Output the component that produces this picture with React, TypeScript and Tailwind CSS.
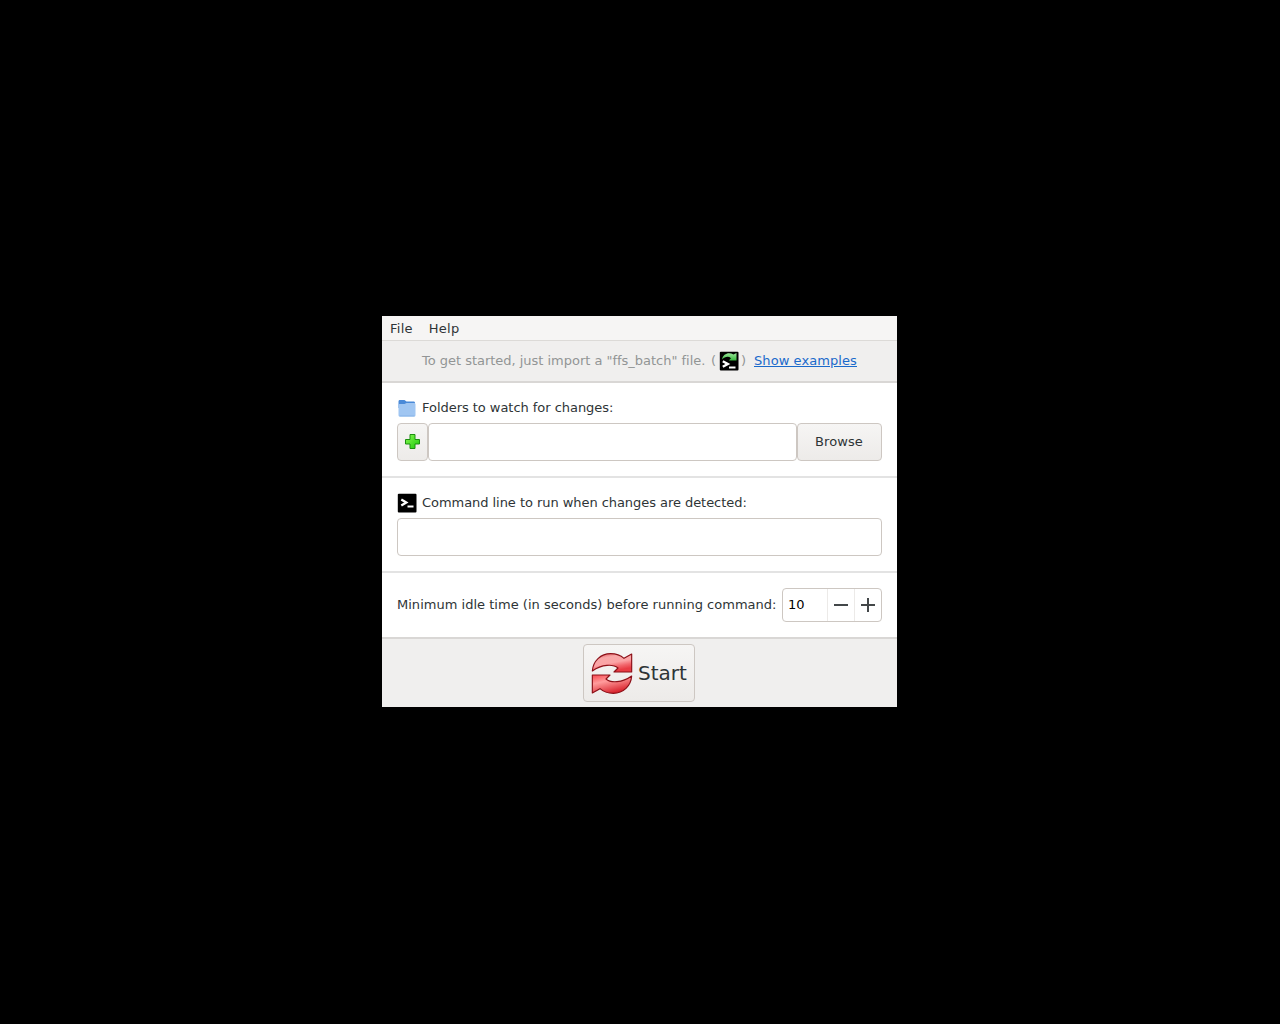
import { useId } from "react";

function TerminalIcon({ sync = false }: { sync?: boolean }) {
  const id = useId();
  return (
    <svg width="20" height="20" viewBox="0 0 20 20" className="shrink-0">
      <defs>
        <linearGradient id={id} x1="0" y1="0" x2="0" y2="1">
          <stop offset="0" stopColor="#9be89a" />
          <stop offset="1" stopColor="#35b43c" />
        </linearGradient>
      </defs>
      <rect x="0.8" y="0.8" width="18.700" height="18.700" rx="1" fill="#000" />
      {sync ? (
        <>
          <path d="M3 8.5C4 2.500 10 0.800 14.500 3.500L17.500 2V9.500H9.800L12 7.200C9.500 5 6 5.500 3 8.500Z" fill={`url(#${id})`} />
          <path d="M3.800 10.300L8.800 13L3.800 15.800" fill="none" stroke="#fff" strokeWidth="2.400" />
          <path d="M10 16.500H16.500" stroke="#fff" strokeWidth="2" />
        </>
      ) : (
        <>
          <path d="M4.300 6.500L9.300 9.500L4.300 12.500" fill="none" stroke="#fff" strokeWidth="2.300" />
          <path d="M10.500 13.500H16.500" stroke="#fff" strokeWidth="2" />
        </>
      )}
    </svg>
  );
}

function FolderIcon() {
  return (
    <svg width="20" height="20" viewBox="0 0 20 20" className="shrink-0">
      <path d="M1.500 3.500C1.500 2.500 2 2 3 2H7.500L9.500 3.500H16.500C17.500 3.500 18 4 18 5V10H1.500Z" fill="#4a8ad8" />
      <path d="M1.500 7C1.500 6.500 2 6 3 6H7.500L9.500 5H17C18 5 18.500 5.500 18.500 6.500V17C18.500 18 18 18.500 17 18.500H3C2 18.500 1.500 18 1.500 17Z" fill="#a0c6f2" />
      <path d="M2.500 18H17.500" stroke="#86b3e8" />
    </svg>
  );
}

function AddIcon() {
  return (
    <svg width="17" height="17" viewBox="0 0 17 17" className="mb-px">
      <defs>
        <linearGradient id="add-fill" x1="0" y1="0" x2="1" y2="1">
          <stop offset="0" stopColor="#8dfa55" />
          <stop offset="1" stopColor="#18c808" />
        </linearGradient>
      </defs>
      <path d="M6 1.500H11V6.500H15.500V11H11V15.500H6V11H1.500V6.500H6Z" fill="url(#add-fill)" stroke="#1c8f10" strokeLinejoin="round" />
    </svg>
  );
}

const ARROW =
  "M13 63C15 33 38 11 68 11C84 11 98 16 108 25L131 12V66H78L90 54C76 42 42 42 13 63Z";

function SyncIcon() {
  return (
    <svg width="42" height="42" viewBox="9 6 126 126">
      <defs>
        <linearGradient id="sync-fill" x1="0" y1="0" x2="0.4" y2="1">
          <stop offset="0" stopColor="#d83a42" />
          <stop offset="0.3" stopColor="#f8a8a8" />
          <stop offset="0.6" stopColor="#fba4a6" />
          <stop offset="0.8" stopColor="#f2686e" />
          <stop offset="1" stopColor="#e83c44" />
        </linearGradient>
        <linearGradient id="sync-fill-low" x1="1" y1="1" x2="0.5" y2="0">
          <stop offset="0" stopColor="#f84850" />
          <stop offset="0.4" stopColor="#ff9c9c" />
          <stop offset="1" stopColor="#d8222c" />
        </linearGradient>
      </defs>
      <path d={ARROW} fill="url(#sync-fill)" stroke="#8c1018" strokeWidth="3.500" strokeLinejoin="round" />
      <path d={ARROW} transform="rotate(180 72 70.5)" fill="url(#sync-fill-low)" stroke="#8c1018" strokeWidth="3.500" strokeLinejoin="round" />
    </svg>
  );
}

const BUTTON = "rounded-[4px] border border-[#cdc7c2] bg-linear-to-b from-[#f6f5f4] to-[#edebe9]";

export default function App() {
  return (
    <div className="flex h-screen w-full items-start justify-center bg-black pt-[316px] font-['DejaVu_Sans',sans-serif] text-[13px] leading-4 text-[#2e3436]">
      <div className="mr-px flex h-[391px] w-[515px] flex-col bg-white">
        <nav className="flex h-[25px] shrink-0 items-center gap-4 border-b border-[#dcdad7] bg-[#f6f5f4] px-2 pt-px tracking-[0.25px]">
          <span>File</span>
          <span>Help</span>
        </nav>
        <div className="flex h-[42px] shrink-0 items-center border-b-2 border-[#d9d7d5] bg-[#f0efee] pl-10 text-[#929595]">
          <span className="w-[289px] whitespace-nowrap tracking-[-0.02px]">To get started, just import a "ffs_batch" file.</span>
          <span className="w-2">(</span>
          <TerminalIcon sync />
          <span className="ml-[2px] w-[13px]">)</span>
          <a className="whitespace-nowrap tracking-[0.08px] text-[#1b6acb] underline">Show examples</a>
        </div>
        <section className="h-[95px] shrink-0 border-b-2 border-[#e3e3e3] px-[15px] pt-[15px]">
          <div className="flex h-5 items-center gap-[5px]">
            <FolderIcon />
            <span className="tracking-[-0.04px]">Folders to watch for changes:</span>
          </div>
          <div className="mt-[5px] flex h-[38px]">
            <button className={`${BUTTON} flex w-[31px] items-center justify-center`}>
              <AddIcon />
            </button>
            <input className="w-[369px] rounded-[4px] border border-[#cdc7c2] bg-white" />
            <button className={`${BUTTON} w-[85px] pr-px tracking-[0.1px]`}>Browse</button>
          </div>
        </section>
        <section className="h-[95px] shrink-0 border-b-2 border-[#e3e3e3] px-[15px] pt-[15px]">
          <div className="flex h-5 items-center gap-[5px]">
            <TerminalIcon />
            <span className="tracking-[-0.05px]">Command line to run when changes are detected:</span>
          </div>
          <input className="mt-[5px] block h-[38px] w-full rounded-[4px] border border-[#cdc7c2] bg-white" />
        </section>
        <section className="flex h-[66px] shrink-0 items-center justify-between border-b-2 border-[#d9d7d5] px-[15px]">
          <span className="whitespace-nowrap tracking-[0.02px]">Minimum idle time (in seconds) before running command:</span>
          <div className="flex h-[34px] w-[100px] shrink-0 overflow-hidden rounded-[4px] border border-[#cdc7c2]">
            <span className="flex flex-1 items-center pl-[5px] text-black">10</span>
            <button className="flex w-[27px] items-center justify-center border-l border-[#eceae8]">
              <svg width="14" height="14" viewBox="0 0 14 14">
                <path d="M0 7H14" stroke="#434749" strokeWidth="2" />
              </svg>
            </button>
            <button className="flex w-[27px] items-center justify-center border-l border-[#eceae8]">
              <svg width="14" height="14" viewBox="0 0 14 14">
                <path d="M0 7H14M7 0V14" stroke="#434749" strokeWidth="2" />
              </svg>
            </button>
          </div>
        </section>
        <footer className="flex flex-1 justify-center bg-[#f0efee] pt-[5px]">
          <button className={`${BUTTON} mr-px flex h-[58px] w-[112px] items-center gap-[5px] pl-[7px] text-[20px] leading-6`}>
            <SyncIcon />
            <span>Start</span>
          </button>
        </footer>
      </div>
    </div>
  );
}
